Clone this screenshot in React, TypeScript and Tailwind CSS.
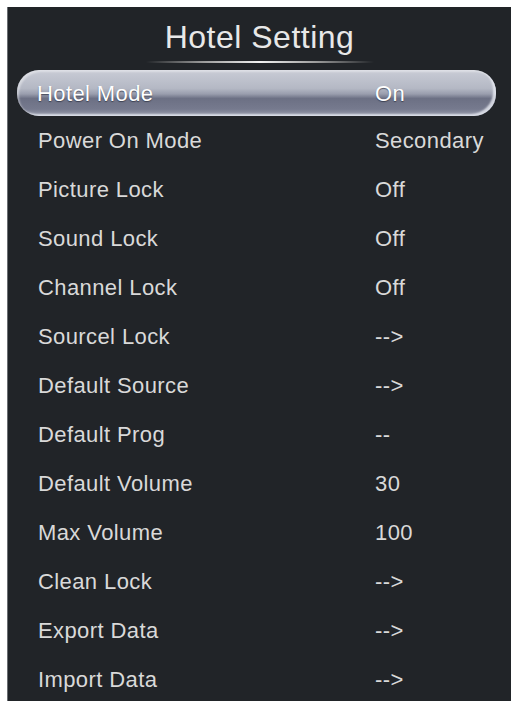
const rows: [string, string][] = [
  ["Power On Mode", "Secondary"],
  ["Picture Lock", "Off"],
  ["Sound Lock", "Off"],
  ["Channel Lock", "Off"],
  ["Sourcel Lock", "-->"],
  ["Default Source", "-->"],
  ["Default Prog", "--"],
  ["Default Volume", "30"],
  ["Max Volume", "100"],
  ["Clean Lock", "-->"],
  ["Export Data", "-->"],
  ["Import Data", "-->"],
]

export default function App() {
  return (
    <div className="h-[701px] w-[515px] overflow-hidden bg-white pt-[7px] pl-[7px] font-['Liberation_Sans',Arial,sans-serif]">
      <div className="h-[694px] w-[504px] border-l border-[#6b6e72] bg-[#212428] text-[#d9d9d9]">
        <div className="pt-[10px] text-center text-[32px] leading-[40px] tracking-[0.5px] text-[#e8e8e8]">
          Hotel Setting
        </div>
        <div className="mx-auto mt-[4px] h-[2px] w-[228px] bg-[linear-gradient(90deg,transparent,#9a9a9a_25%,#f2f2f2_50%,#9a9a9a_75%,transparent)]" />

        <div className="mt-[7px] ml-[9px] mr-[15px] flex h-[46px] items-center rounded-[22px] bg-[linear-gradient(180deg,#c9ccd6_0%,#b4b8c4_40%,#9a9eae_52%,#6c7084_62%,#767a8e_85%,#9a9eae_100%)] pl-[20px] text-[22px] tracking-[0.4px] text-white shadow-[inset_-3px_-2px_2px_rgba(235,238,245,0.8),inset_2px_2px_2px_rgba(255,255,255,0.4)] [text-shadow:0_1px_1px_rgba(40,44,60,0.7)]">
          <span className="w-[338px]">Hotel Mode</span>
          <span>On</span>
        </div>

        <div className="flex flex-col">
          {rows.map(([label, value]) => (
            <div key={label} className="flex h-[49px] items-center pl-[30px] text-[22px] tracking-[0.4px]">
              <span className="w-[337px]">{label}</span>
              <span>{value}</span>
            </div>
          ))}
        </div>
      </div>
    </div>
  )
}
